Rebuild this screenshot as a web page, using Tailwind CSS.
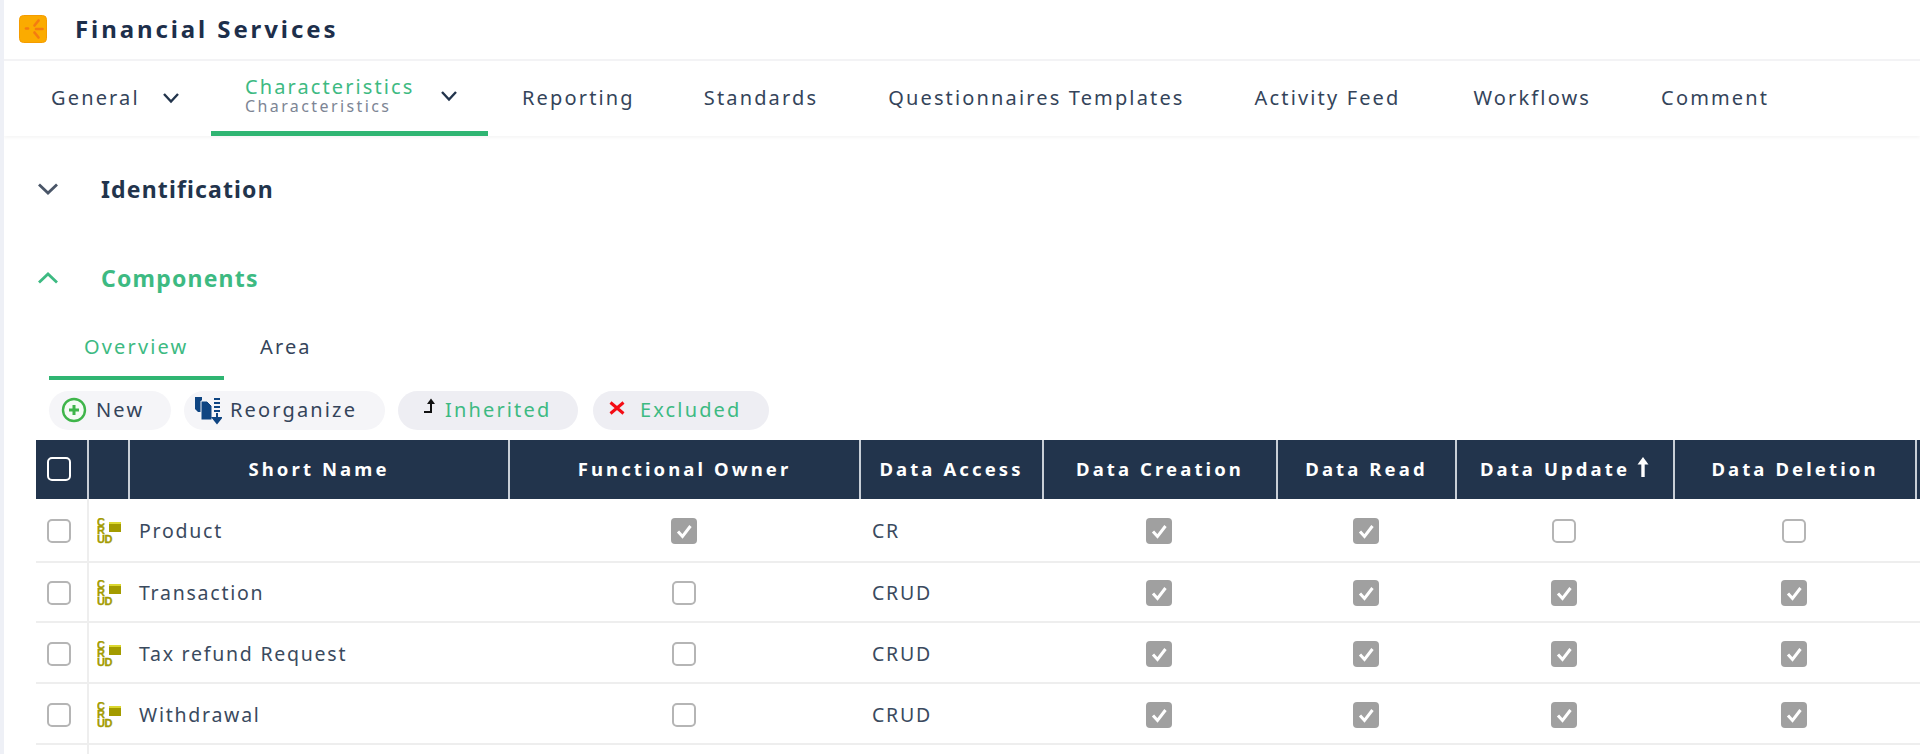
<!DOCTYPE html>
<html lang="en">
<head>
<meta charset="UTF-8">
<title>Financial Services</title>
<script src="https://cdn.jsdelivr.net/npm/@tailwindcss/browser@4"></script>
</head>
<body class="bg-white h-[754px] overflow-hidden font-['Noto_Sans',sans-serif] text-[#22344c]">
<div class="h-[754px] border-l-[4px] border-[#eef0f6] overflow-hidden">

  <!-- title bar -->
  <header class="h-[61px] flex items-center pl-[15px] pb-[1px] border-b-2 border-[#f3f3f5]">
    <svg width="28" height="28" viewBox="0 0 28 28" class="shrink-0">
      <rect x="0.5" y="0.5" width="27" height="27" rx="4" fill="#fbab00" stroke="#f59c00"/>
      <g stroke="#f47c10" stroke-width="2.6" stroke-linecap="round">
        <path d="M15.5 10.5 L19.5 5.5"/>
        <path d="M15.5 17.5 L19.5 22.5"/>
        <path d="M17 14 H23.5"/>
        <path d="M7 13.5 H9"/>
      </g>
    </svg>
    <h1 class="ml-[28px] text-[24px] font-bold tracking-[2.9px] text-[#1d2f4b]">Financial Services</h1>
  </header>

  <!-- main tabs -->
  <nav class="h-[75px] flex items-stretch text-[20px] tracking-[2.15px] text-[#34445a] shadow-[0_2px_3px_rgba(0,0,0,0.04)] [&>a]:pb-[2px]">
    <a class="w-[207px] pl-[47px] flex items-center">General
      <svg width="18" height="12" viewBox="0 0 18 12" class="ml-[22px]"><path d="M2 2 L9 9.5 L16 2" fill="none" stroke="#22344c" stroke-width="2.4"/></svg>
    </a>
    <a class="w-[277px] pl-[34px] flex items-center border-b-[5px] border-[#2fb572] pt-[2px]">
      <span class="flex flex-col w-[195px]">
        <span class="text-[#3dba82] text-[20px] leading-[21px] tracking-[2.1px]">Characteristics</span>
        <span class="text-[#7d8594] text-[16px] leading-[19px] tracking-[2.4px]">Characteristics</span>
      </span>
      <svg width="18" height="12" viewBox="0 0 18 12" class="shrink-0"><path d="M2 2 L9 9.5 L16 2" fill="none" stroke="#22344c" stroke-width="2.4"/></svg>
    </a>
    <a class="ml-[34px] flex items-center">Reporting</a>
    <a class="ml-[69px] flex items-center">Standards</a>
    <a class="ml-[70px] flex items-center">Questionnaires Templates</a>
    <a class="ml-[70px] flex items-center">Activity Feed</a>
    <a class="ml-[73px] flex items-center">Workflows</a>
    <a class="ml-[70px] flex items-center">Comment</a>
  </nav>

  <!-- sections -->
  <section class="h-[106px] flex items-center pl-[33px]">
    <svg width="22" height="14" viewBox="0 0 22 14"><path d="M2 2.5 L11 11 L20 2.5" fill="none" stroke="#4a5668" stroke-width="2.8"/></svg>
    <h2 class="ml-[42px] text-[23px] font-bold tracking-[1.15px] text-[#22344c]">Identification</h2>
  </section>
  <section class="h-[72px] flex items-center pl-[33px]">
    <svg width="22" height="14" viewBox="0 0 22 14"><path d="M2 11.5 L11 3 L20 11.5" fill="none" stroke="#3dba82" stroke-width="2.8"/></svg>
    <h2 class="ml-[42px] text-[23px] font-bold tracking-[1.2px] text-[#3dba82]">Components</h2>
  </section>

  <!-- sub tabs -->
  <div class="ml-[45px] h-[66px] pt-[18px] flex text-[20px] tracking-[2.15px]">
    <a class="w-[175px] pl-[35px] border-b-[4px] border-[#2fb572] text-[#3dba82]">Overview</a>
    <a class="ml-[36px] text-[#34445a]">Area</a>
  </div>

  <!-- toolbar -->
  <div class="ml-[45px] mt-[11px] flex gap-[13px] text-[20px] tracking-[2.15px] text-[#34445a] [&>button]:pb-[2px]">
    <button class="w-[122px] h-[39px] rounded-full bg-[#f5f5f8] flex items-center pl-[12px]">
      <svg width="26" height="26" viewBox="0 0 26 26"><circle cx="13" cy="13" r="11" fill="#f5fbf5" stroke="#3fb54a" stroke-width="2.4"/><path d="M8 13 H18 M13 8 V18" stroke="#3fb54a" stroke-width="3"/></svg>
      <span class="ml-[9px]">New</span>
    </button>
    <button class="w-[201px] h-[39px] rounded-full bg-[#f5f5f8] flex items-center pl-[10px]">
      <svg width="28" height="30" viewBox="0 0 28 30">
        <path d="M1 2 H8 V17 H4 L1 14 Z" fill="#0f4582"/>
        <path d="M7 6 H13 L18 11 V25 H7 Z" fill="#0f4582" stroke="#f5f5f8"/>
        <path d="M20 4 H26 M20 8 H26 M20 12 H26 M20 16 H26" stroke="#0f4582" stroke-width="2"/>
        <path d="M23 18 V24 M19 23 H27 L23 28 Z" stroke="#0f4582" stroke-width="2" fill="#0f4582"/>
      </svg>
      <span class="ml-[8px]">Reorganize</span>
    </button>
    <button class="w-[180px] h-[39px] rounded-full bg-[#eeeef3] flex items-center pl-[25px]">
      <svg width="14" height="20" viewBox="0 0 14 20" class="mb-[6px]"><path d="M1 15 H8 V6" fill="none" stroke="#111" stroke-width="2"/><path d="M4 7 L8 1.5 L12 7 Z" fill="#111"/></svg>
      <span class="ml-[8px] text-[#3dba82]">Inherited</span>
    </button>
    <button class="ml-[2px] w-[176px] h-[39px] rounded-full bg-[#eeeef3] flex items-center pl-[16px]">
      <svg width="16" height="14" viewBox="0 0 16 14" class="mb-[4px]"><path d="M1.5 1.5 L14.5 12.5 M14.5 1.5 L1.5 12.5" stroke="#f40c14" stroke-width="3"/></svg>
      <span class="ml-[15px] text-[#3dba82]">Excluded</span>
    </button>
  </div>

  <!-- grid -->
  <table class="ml-[32px] mt-[10px] table-fixed border-collapse w-[1884px] text-[19.5px] tracking-[1.75px] text-[#3a4a5e]">
    <colgroup>
      <col class="w-[52px]"><col class="w-[41px]"><col class="w-[380px]"><col class="w-[351px]"><col class="w-[183px]"><col class="w-[234px]"><col class="w-[179px]"><col class="w-[218px]"><col class="w-[242px]"><col>
    </colgroup>
    <thead>
      <tr class="h-[59px] bg-[#22344c] text-white text-[18.5px] font-bold tracking-[3.1px] [&>th]:pb-[2px]">
        <th class="border-r-2 border-[#c8ced6] pr-[6px]"><span class="block m-auto w-[24px] h-[24px] rounded-[5px] border-2 border-white"></span></th>
        <th class="border-r-2 border-[#c8ced6]"></th>
        <th class="border-r-2 border-[#c8ced6]">Short Name</th>
        <th class="border-r-2 border-[#c8ced6]">Functional Owner</th>
        <th class="border-r-2 border-[#c8ced6] whitespace-nowrap">Data Access</th>
        <th class="border-r-2 border-[#c8ced6] whitespace-nowrap">Data Creation</th>
        <th class="border-r-2 border-[#c8ced6] whitespace-nowrap">Data Read</th>
        <th class="border-r-2 border-[#c8ced6] whitespace-nowrap">
          <div class="flex items-center justify-center gap-[6px]">Data Update <svg width="14" height="22" viewBox="0 0 14 22" class="-mt-[3px]"><path d="M7 21 V4" stroke="#fff" stroke-width="3.4"/><path d="M1.5 8.5 L7 1 L12.5 8.5 Z" fill="#fff"/></svg></div>
        </th>
        <th class="border-r-2 border-[#c8ced6] whitespace-nowrap">Data Deletion</th>
        <th></th>
      </tr>
    </thead>
    <tbody class="[&_td]:pr-[2px] [&_td]:pt-[2px]">
      <tr class="h-[63px] border-b-2 border-[#eeeeee]">
        <td class="!pr-[6px]"><span class="block m-auto w-[24px] h-[24px] rounded-[5px] border-2 border-[#b5b5b5]"></span></td>
        <td class="border-l-2 border-[#eeeeee]"><svg width="26" height="26" viewBox="0 0 26 26" class="ml-[8px]"><use href="#crud"/></svg></td>
        <td class="pl-[10px]">Product</td>
        <td><span class="block m-auto w-[26px] h-[26px] rounded-[4px] bg-[#a0a0a0]"><svg viewBox="0 0 26 26"><use href="#tick"/></svg></span></td>
        <td class="pl-[12px]">CR</td>
        <td><span class="block m-auto w-[26px] h-[26px] rounded-[4px] bg-[#a0a0a0]"><svg viewBox="0 0 26 26"><use href="#tick"/></svg></span></td>
        <td><span class="block m-auto w-[26px] h-[26px] rounded-[4px] bg-[#a0a0a0]"><svg viewBox="0 0 26 26"><use href="#tick"/></svg></span></td>
        <td><span class="block m-auto w-[24px] h-[24px] rounded-[5px] border-2 border-[#b5b5b5]"></span></td>
        <td><span class="block m-auto w-[24px] h-[24px] rounded-[5px] border-2 border-[#b5b5b5]"></span></td>
        <td></td>
      </tr>
      <tr class="h-[60px] border-b-2 border-[#eeeeee]">
        <td class="!pr-[6px]"><span class="block m-auto w-[24px] h-[24px] rounded-[5px] border-2 border-[#b5b5b5]"></span></td>
        <td class="border-l-2 border-[#eeeeee]"><svg width="26" height="26" viewBox="0 0 26 26" class="ml-[8px]"><use href="#crud"/></svg></td>
        <td class="pl-[10px]">Transaction</td>
        <td><span class="block m-auto w-[24px] h-[24px] rounded-[5px] border-2 border-[#b5b5b5]"></span></td>
        <td class="pl-[12px]">CRUD</td>
        <td><span class="block m-auto w-[26px] h-[26px] rounded-[4px] bg-[#a0a0a0]"><svg viewBox="0 0 26 26"><use href="#tick"/></svg></span></td>
        <td><span class="block m-auto w-[26px] h-[26px] rounded-[4px] bg-[#a0a0a0]"><svg viewBox="0 0 26 26"><use href="#tick"/></svg></span></td>
        <td><span class="block m-auto w-[26px] h-[26px] rounded-[4px] bg-[#a0a0a0]"><svg viewBox="0 0 26 26"><use href="#tick"/></svg></span></td>
        <td><span class="block m-auto w-[26px] h-[26px] rounded-[4px] bg-[#a0a0a0]"><svg viewBox="0 0 26 26"><use href="#tick"/></svg></span></td>
        <td></td>
      </tr>
      <tr class="h-[61px] border-b-2 border-[#eeeeee]">
        <td class="!pr-[6px]"><span class="block m-auto w-[24px] h-[24px] rounded-[5px] border-2 border-[#b5b5b5]"></span></td>
        <td class="border-l-2 border-[#eeeeee]"><svg width="26" height="26" viewBox="0 0 26 26" class="ml-[8px]"><use href="#crud"/></svg></td>
        <td class="pl-[10px]">Tax refund Request</td>
        <td><span class="block m-auto w-[24px] h-[24px] rounded-[5px] border-2 border-[#b5b5b5]"></span></td>
        <td class="pl-[12px]">CRUD</td>
        <td><span class="block m-auto w-[26px] h-[26px] rounded-[4px] bg-[#a0a0a0]"><svg viewBox="0 0 26 26"><use href="#tick"/></svg></span></td>
        <td><span class="block m-auto w-[26px] h-[26px] rounded-[4px] bg-[#a0a0a0]"><svg viewBox="0 0 26 26"><use href="#tick"/></svg></span></td>
        <td><span class="block m-auto w-[26px] h-[26px] rounded-[4px] bg-[#a0a0a0]"><svg viewBox="0 0 26 26"><use href="#tick"/></svg></span></td>
        <td><span class="block m-auto w-[26px] h-[26px] rounded-[4px] bg-[#a0a0a0]"><svg viewBox="0 0 26 26"><use href="#tick"/></svg></span></td>
        <td></td>
      </tr>
      <tr class="h-[61px] border-b-2 border-[#eeeeee]">
        <td class="!pr-[6px]"><span class="block m-auto w-[24px] h-[24px] rounded-[5px] border-2 border-[#b5b5b5]"></span></td>
        <td class="border-l-2 border-[#eeeeee]"><svg width="26" height="26" viewBox="0 0 26 26" class="ml-[8px]"><use href="#crud"/></svg></td>
        <td class="pl-[10px]">Withdrawal</td>
        <td><span class="block m-auto w-[24px] h-[24px] rounded-[5px] border-2 border-[#b5b5b5]"></span></td>
        <td class="pl-[12px]">CRUD</td>
        <td><span class="block m-auto w-[26px] h-[26px] rounded-[4px] bg-[#a0a0a0]"><svg viewBox="0 0 26 26"><use href="#tick"/></svg></span></td>
        <td><span class="block m-auto w-[26px] h-[26px] rounded-[4px] bg-[#a0a0a0]"><svg viewBox="0 0 26 26"><use href="#tick"/></svg></span></td>
        <td><span class="block m-auto w-[26px] h-[26px] rounded-[4px] bg-[#a0a0a0]"><svg viewBox="0 0 26 26"><use href="#tick"/></svg></span></td>
        <td><span class="block m-auto w-[26px] h-[26px] rounded-[4px] bg-[#a0a0a0]"><svg viewBox="0 0 26 26"><use href="#tick"/></svg></span></td>
        <td></td>
      </tr>
      <tr class="h-[20px]"><td></td><td class="border-l-2 border-[#eeeeee]"></td><td colspan="8"></td></tr>
    </tbody>
  </table>
</div>

<svg width="0" height="0" class="absolute">
  <defs>
    <g id="tick"><path d="M7 13.5 L11.5 18.5 L19.5 8" fill="none" stroke="#fff" stroke-width="3"/></g>
    <g id="crud" font-family="Liberation Sans" font-weight="700" font-size="11" letter-spacing="0" fill="#a39b00" stroke="#a39b00" stroke-width="0.3">
      <rect x="12" y="4" width="12" height="10" stroke="none"/>
      <rect x="12" y="4" width="12" height="2" fill="#dcd830" stroke="none"/>
      <text x="0" y="8">C</text>
      <text x="0" y="16">R</text>
      <text x="0" y="25">U</text>
      <text x="7.5" y="25">D</text>
    </g>
  </defs>
</svg>
</body>
</html>
